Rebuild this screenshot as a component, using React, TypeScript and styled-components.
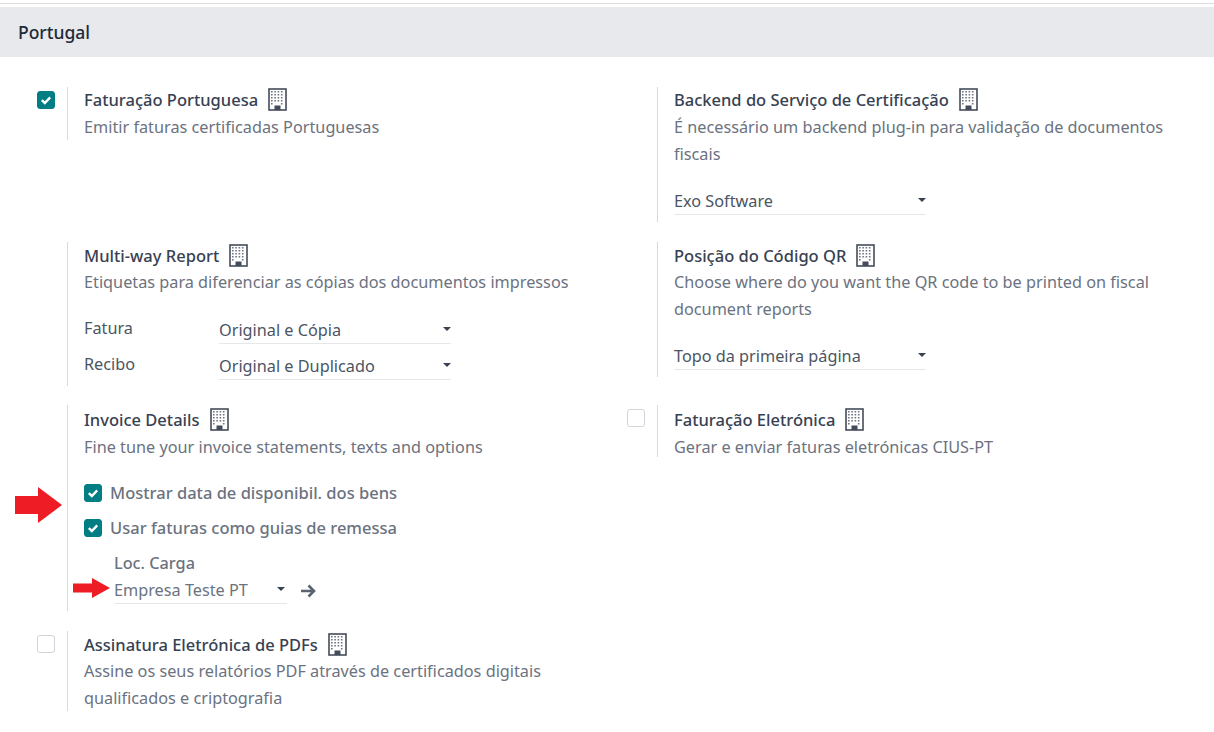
import React from "react";
import type { FC, ReactNode } from "react";
import styled, { createGlobalStyle } from "styled-components";

const GlobalStyle = createGlobalStyle`
  html, body {
    margin: 0;
    background: #ffffff;
    overflow: hidden;
    font-family: "Noto Sans", "Open Sans", sans-serif;
    font-size: 16.25px;
    color: #4b5563;
  }
`;

const Page = styled.div`
  width: 1214px;
  height: 732px;
  padding-top: 3px;
  box-sizing: border-box;
`;

const TopRule = styled.div`
  height: 1px;
  background: #dcdcdc;
`;

const SectionTitle = styled.h2`
  margin: 3px 0 0;
  height: 50px;
  padding-left: 18px;
  background: #e7e9ed;
  color: #1f2937;
  font-size: 17.5px;
  font-weight: 500;
  line-height: 50px;
`;

const SettingsGrid = styled.div`
  display: grid;
  grid-template-columns: 590px 610px;
  grid-template-rows: 135px 143px 206px 79px;
  row-gap: 20px;
  align-items: start;
  padding-top: 30px;
`;

const Setting = styled.div`
  display: flex;
  align-items: flex-start;
`;

const CheckColumn = styled.div`
  width: 67px;
  flex: none;
  display: flex;
  justify-content: flex-end;
  padding-right: 12px;
  box-sizing: border-box;
`;

const Body = styled.div`
  flex: 1;
  border-left: 1px solid #d8dadd;
  padding-left: 16px;
`;

const TitleRow = styled.div<{ $nudge?: "up" | "down" }>`
  display: flex;
  align-items: center;
  height: 26px;
  gap: 10px;
  margin-top: ${(p) => (p.$nudge === "up" ? -1 : p.$nudge === "down" ? 1 : 0)}px;
  margin-bottom: ${(p) => (p.$nudge ? 2 : 0)}px;
  color: #374151;
  font-size: 16.5px;
  font-weight: 500;
`;

const Help = styled.div<{ $short?: boolean }>`
  line-height: 27px;
  margin: 1px 0 ${(p) => (p.$short ? -4 : -1)}px;
  color: #6b7280;
`;

const CheckBox = styled.span<{ $checked?: boolean }>`
  width: 18px;
  height: 18px;
  flex: none;
  box-sizing: border-box;
  border-radius: 3px;
  display: inline-flex;
  align-items: center;
  justify-content: center;
  margin-top: 4px;
  background: ${(p) => (p.$checked ? "#017e84" : "#ffffff")};
  border: 1px solid ${(p) => (p.$checked ? "#017e84" : "#d1d5db")};
`;

const SelectBox = styled.div<{ $width: number; $muted?: boolean }>`
  width: ${(p) => p.$width}px;
  height: 27px;
  box-sizing: border-box;
  display: flex;
  align-items: center;
  justify-content: space-between;
  padding-right: ${(p) => (p.$muted ? 2 : 0)}px;
  border-bottom: 1px solid #e5e7eb;
  color: ${(p) => (p.$muted ? "#6b7280" : "#4b5563")};
`;

const Caret = styled.span`
  width: 0;
  height: 0;
  margin-bottom: 2px;
  border-left: 4.5px solid transparent;
  border-right: 4.5px solid transparent;
  border-top: 4.5px solid #374151;
`;

const BlockSelect = styled.div`
  margin-top: 21px;
  padding-bottom: 7px;
`;

const FieldRow = styled.div`
  display: flex;
  align-items: center;
  height: 36px;
`;

const FieldLabel = styled.div`
  width: 135px;
  padding-bottom: 4px;
  color: #4b5563;
`;

const FieldRows = styled.div`
  margin-top: 17px;
  padding-bottom: 2px;
`;

const OptionRow = styled.div`
  position: relative;
  display: flex;
  align-items: center;
  gap: 8px;
  height: 35px;
  color: #6b7280;
  font-size: 16.5px;
  font-weight: 500;
`;

const OptionList = styled.div`
  margin-top: 15px;
`;

const OptionBox = styled(CheckBox)`
  margin-top: 0;
`;

const CargaBlock = styled.div`
  margin-top: 5px;
  padding: 0 0 7px 30px;
`;

const CargaLabel = styled.div`
  height: 27px;
  line-height: 26px;
  color: #6b7280;
  font-weight: 500;
`;

const CargaRow = styled.div`
  position: relative;
  display: flex;
  align-items: center;
  gap: 13px;
`;

const RedArrow = styled.svg`
  position: absolute;
  display: block;
`;

const BigArrow = styled(RedArrow)`
  left: -69px;
  top: 12px;
`;

const SmallArrow = styled(RedArrow)`
  left: -41px;
  top: 1px;
`;

const CheckMark: FC = () => (
  <svg width="14" height="14" viewBox="0 0 14 14" fill="none">
    <path d="M2.8 7.2 L5.8 10 L11.2 4.4" stroke="#fff" strokeWidth="2.4" />
  </svg>
);

const BuildingIcon: FC = () => {
  const windows = [];
  for (let row = 0; row < 5; row++) {
    for (let col = 0; col < 4; col++) {
      if (row === 4 && (col === 1 || col === 2)) continue;
      windows.push(<rect key={`${row}-${col}`} x={3 + col * 3.3} y={3 + row * 3} width="1.6" height="1.5" fill="#6f7480" />);
    }
  }
  return (
    <svg width="19" height="23" viewBox="0 0 19 23" fill="none">
      <rect x="1" y="1" width="17" height="21" fill="#fff" stroke="#444b5a" strokeWidth="1.6" />
      {windows}
      <rect x="6.5" y="17.5" width="6" height="4.5" fill="#444b5a" />
    </svg>
  );
};

const ArrowRight: FC = () => (
  <svg width="16" height="14" viewBox="0 0 16 14" fill="none">
    <path d="M1 7 H14 M8.5 1.5 L14 7 L8.5 12.5" stroke="#5b6270" strokeWidth="2.6" />
  </svg>
);

interface SelectProps {
  width: number;
  muted?: boolean;
  children: ReactNode;
}

const Select: FC<SelectProps> = ({ width, muted, children }) => (
  <SelectBox $width={width} $muted={muted}>
    {children}
    <Caret />
  </SelectBox>
);

interface ItemProps {
  title: string;
  checkbox?: "on" | "off";
  nudge?: "up" | "down";
  children?: ReactNode;
}

const Item: FC<ItemProps> = ({ title, checkbox, nudge, children }) => (
  <Setting>
    <CheckColumn>
      {checkbox && (
        <CheckBox $checked={checkbox === "on"}>{checkbox === "on" && <CheckMark />}</CheckBox>
      )}
    </CheckColumn>
    <Body>
      <TitleRow $nudge={nudge}>
        {title}
        <BuildingIcon />
      </TitleRow>
      {children}
    </Body>
  </Setting>
);

export default function App() {
  return (
    <Page>
      <GlobalStyle />
      <TopRule />
      <SectionTitle>Portugal</SectionTitle>
      <SettingsGrid>
        <Item title="Faturação Portuguesa" checkbox="on" nudge="up">
          <Help>Emitir faturas certificadas Portuguesas</Help>
        </Item>
        <Item title="Backend do Serviço de Certificação" nudge="up">
          <Help>É necessário um backend plug-in para validação de documentos fiscais</Help>
          <BlockSelect>
            <Select width={252}>Exo Software</Select>
          </BlockSelect>
        </Item>
        <Item title="Multi-way Report">
          <Help>Etiquetas para diferenciar as cópias dos documentos impressos</Help>
          <FieldRows>
            <FieldRow>
              <FieldLabel>Fatura</FieldLabel>
              <Select width={232}>Original e Cópia</Select>
            </FieldRow>
            <FieldRow>
              <FieldLabel>Recibo</FieldLabel>
              <Select width={232}>Original e Duplicado</Select>
            </FieldRow>
          </FieldRows>
        </Item>
        <Item title="Posição do Código QR">
          <Help>Choose where do you want the QR code to be printed on fiscal document reports</Help>
          <BlockSelect>
            <Select width={252}>Topo da primeira página</Select>
          </BlockSelect>
        </Item>
        <Item title="Invoice Details" nudge="down">
          <Help>Fine tune your invoice statements, texts and options</Help>
          <OptionList>
            <OptionRow>
              <BigArrow width="47" height="36" viewBox="0 0 47 36">
                <path d="M0 9 H23 V0 L47 18 L23 36 V27 H0 Z" fill="#ee1c25" />
              </BigArrow>
              <OptionBox $checked>
                <CheckMark />
              </OptionBox>
              Mostrar data de disponibil. dos bens
            </OptionRow>
            <OptionRow>
              <OptionBox $checked>
                <CheckMark />
              </OptionBox>
              Usar faturas como guias de remessa
            </OptionRow>
          </OptionList>
          <CargaBlock>
            <CargaLabel>Loc. Carga</CargaLabel>
            <CargaRow>
              <SmallArrow width="37" height="20" viewBox="0 0 37 20">
                <path d="M0 5.5 H19 V0 L37 10 L19 20 V14.5 H0 Z" fill="#ee1c25" />
              </SmallArrow>
              <Select width={173} muted>
                Empresa Teste PT
              </Select>
              <ArrowRight />
            </CargaRow>
          </CargaBlock>
        </Item>
        <Item title="Faturação Eletrónica" checkbox="off" nudge="down">
          <Help $short>Gerar e enviar faturas eletrónicas CIUS-PT</Help>
        </Item>
        <Item title="Assinatura Eletrónica de PDFs" checkbox="off">
          <Help>
            Assine os seus relatórios PDF através de certificados digitais
            <br />
            qualificados e criptografia
          </Help>
        </Item>
      </SettingsGrid>
    </Page>
  );
}
